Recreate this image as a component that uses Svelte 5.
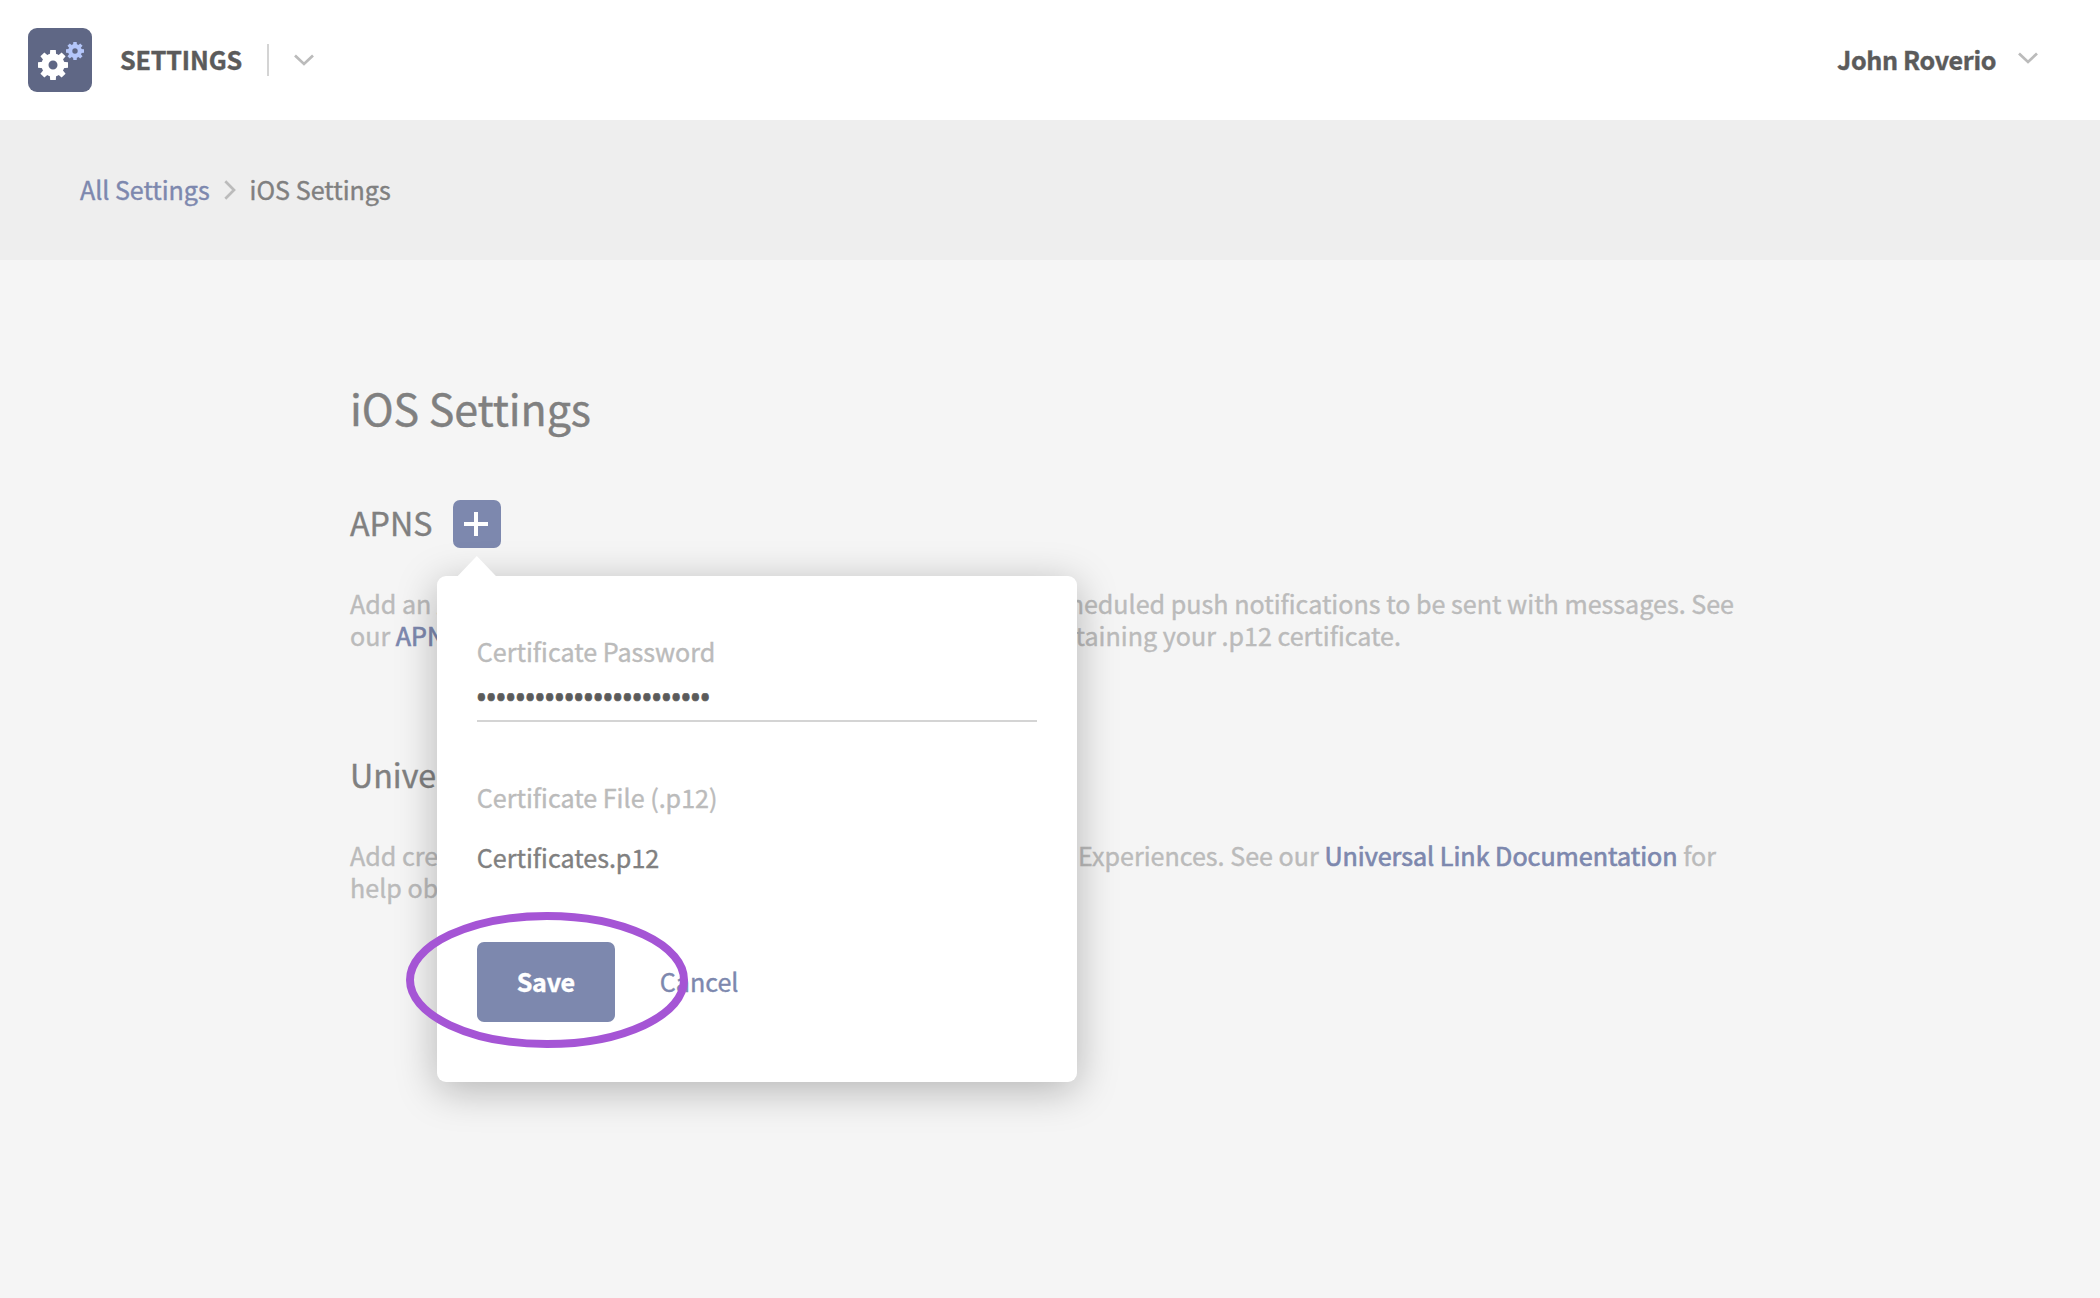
<script>
  const teeth = [0, 45, 90, 135, 180, 225, 270, 315];
  const password = '•'.repeat(24);
</script>

{#snippet chevron()}
  <svg class="chevron" width="20" height="13" viewBox="0 0 20 13">
    <path d="M1 1.5 L10 10 L19 1.5" />
  </svg>
{/snippet}

{#snippet gear(cx, cy, scale, cls)}
  <g class={cls} transform="translate({cx} {cy}) scale({scale})">
    {#each teeth as angle}
      <path d="M-3.2 -10 L-2.8 -15 H2.8 L3.2 -10 Z" transform="rotate({angle})" />
    {/each}
    <circle r="8" class="ring" />
  </g>
{/snippet}

<div class="page">
  <header>
    <svg class="logo" width="64" height="64" viewBox="0 0 64 64">
      <rect width="64" height="64" rx="9" fill="#5f6785" />
      {@render gear(25, 37, 1, 'gear-big')}
      {@render gear(47, 23, 0.6, 'gear-small')}
    </svg>
    <span class="app-name">SETTINGS</span>
    <span class="divider"></span>
    {@render chevron()}
    <div class="user">
      <span>John Roverio</span>
      {@render chevron()}
    </div>
  </header>

  <nav>
    <a href="#all">All Settings</a>
    <svg class="chevron crumb" width="12" height="20" viewBox="0 0 12 20">
      <path d="M1.3 1.3 L10 10 L1.3 18.7" />
    </svg>
    <span>iOS Settings</span>
  </nav>

  <main>
    <h1>iOS Settings</h1>
    <section>
      <div class="title-row">
        <h2>APNS</h2>
        <div class="anchor">
          <button class="add" aria-label="Add">
            <svg width="24" height="24" viewBox="0 0 24 24"><path d="M12 0V24M0 12H24" /></svg>
          </button>
          <div class="popover">
            <div class="label">Certificate Password</div>
            <div class="field"><span>{password}</span></div>
            <div class="label second">Certificate File (.p12)</div>
            <div class="file">Certificates.p12</div>
            <div class="actions">
              <button class="save">Save</button>
              <a href="#cancel">Cancel</a>
            </div>
            <svg class="highlight" width="282" height="136" viewBox="0 0 282 136">
              <ellipse cx="141" cy="68" rx="137" ry="64" />
            </svg>
          </div>
        </div>
      </div>
      <div class="copy">
        <div class="line l1"><span>Add an APNS certificate to allow</span><span>scheduled push notifications to be sent with messages. See</span></div>
        <div class="line l2"><span>our <a href="#apns">APNS Documentation</a> for help</span><span>obtaining your .p12 certificate.</span></div>
      </div>
    </section>
    <section class="universal">
      <h2>Universal Links</h2>
      <div class="copy">
        <div class="line l3"><span>Add credentials to enable links</span><span>Experiences. See our <a href="#universal">Universal Link Documentation</a> for</span></div>
        <div class="line"><span>help obtaining these.</span></div>
      </div>
    </section>
  </main>
</div>

<style>
  :global(body) {
    background: #f5f5f5;
  }
  .page {
    min-height: 1298px;
    background: #f5f5f5;
    font-family: 'Noto Sans CJK JP', 'Noto Sans', sans-serif;
    font-size: 25.1px;
    line-height: 32px;
    color: #808080;
    -webkit-text-stroke: 0.4px currentColor;
  }
  a {
    color: #7d88ae;
    text-decoration: none;
  }
  button {
    border: 0;
    padding: 0;
    font: inherit;
    background: #7d88ae;
    color: #fff;
  }
  header {
    display: flex;
    align-items: center;
    box-sizing: border-box;
    height: 120px;
    padding: 0 62px 0 28px;
    background: #fff;
    color: #5b5b5b;
    font-weight: 700;
  }
  .logo {
    margin-right: 28px;
  }
  .gear-big {
    fill: #fff;
  }
  .gear-small {
    fill: #b4c6fa;
  }
  .ring {
    fill: none;
    stroke-width: 7;
  }
  .gear-big .ring {
    stroke: #fff;
  }
  .gear-small .ring {
    stroke: #b4c6fa;
  }
  .app-name,
  .user span {
    padding-bottom: 2px;
  }
  .app-name {
    letter-spacing: -0.15px;
  }
  .divider {
    width: 2px;
    height: 32px;
    margin: 0 25px;
    background: #d4d4d4;
  }
  .chevron {
    fill: none;
    stroke: #bbb;
    stroke-width: 2.7;
  }
  .user {
    display: flex;
    align-items: center;
    margin-left: auto;
    gap: 22px;
    letter-spacing: -0.36px;
  }
  .user .chevron {
    margin-bottom: 4px;
  }
  nav {
    display: flex;
    align-items: center;
    box-sizing: border-box;
    height: 140px;
    padding: 0 80px 2px;
    background: #eee;
  }
  nav a {
    letter-spacing: -0.05px;
  }
  .crumb {
    margin: 2px 13.5px 0 14.5px;
  }
  main {
    padding: 120px 350px 0;
  }
  h1,
  h2 {
    margin: 0;
    font-weight: 400;
    white-space: nowrap;
  }
  h1 {
    font-size: 43px;
    line-height: 54px;
    letter-spacing: -0.08px;
  }
  h2 {
    font-size: 32.2px;
    line-height: 45px;
  }
  .title-row {
    display: flex;
    height: 48px;
    margin-top: 66px;
    gap: 21px;
  }
  .anchor {
    position: relative;
  }
  .add {
    display: flex;
    align-items: center;
    justify-content: center;
    width: 48px;
    height: 48px;
    padding-right: 2px;
    border-radius: 7px;
  }
  .add svg {
    stroke: #fff;
    stroke-width: 4;
  }
  .copy {
    margin-top: 39px;
    color: #bbb;
    white-space: nowrap;
  }
  .copy a {
    -webkit-text-stroke-width: 0.7px;
  }
  .line {
    display: flex;
    justify-content: space-between;
  }
  .l1 {
    width: 1384px;
  }
  .l2 {
    width: 1051px;
  }
  .l3 {
    width: 1366px;
  }
  .universal {
    margin-top: 99px;
  }
  .universal h2 {
    line-height: 48px;
  }
  .universal .copy {
    margin-top: 41px;
  }
  .popover {
    position: absolute;
    top: 76px;
    left: -16.6px;
    z-index: 2;
    box-sizing: border-box;
    width: 640px;
    height: 506px;
    padding: 59px 40px 0;
    border-radius: 9px;
    background: #fff;
    box-shadow: 0 8px 40px rgba(0, 0, 0, 0.27);
  }
  .popover::before {
    content: '';
    position: absolute;
    top: -20px;
    left: 20px;
    width: 40px;
    height: 21px;
    background: #fff;
    clip-path: polygon(50% 0, 100% 100%, 0 100%);
  }
  .label {
    color: #bbb;
  }
  .field {
    height: 53px;
    border-bottom: 2px solid #d4d4d4;
    color: #5b5b5b;
    font-family: 'Noto Sans', sans-serif;
    font-size: 30px;
    line-height: 61px;
    letter-spacing: -1.55px;
    text-indent: -1px;
    white-space: nowrap;
    -webkit-text-stroke-width: 0.7px;
  }
  .second {
    margin-top: 59px;
  }
  .file {
    margin-top: 28px;
  }
  .actions {
    display: flex;
    align-items: center;
    margin-top: 69px;
    gap: 45px;
  }
  .actions a {
    padding-bottom: 2px;
  }
  .save {
    width: 138px;
    height: 80px;
    padding-bottom: 2px;
    border-radius: 7px;
    font-weight: 700;
    letter-spacing: -0.3px;
  }
  .highlight {
    position: absolute;
    top: 336px;
    left: -30.4px;
    fill: none;
    stroke: #a555d5;
    stroke-width: 8;
  }
</style>
